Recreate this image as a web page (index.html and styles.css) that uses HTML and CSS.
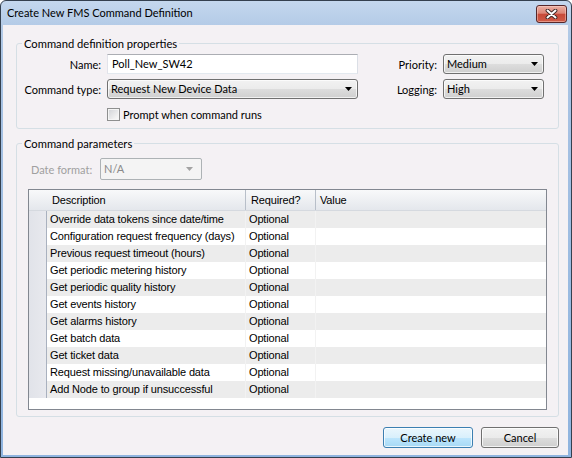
FILE: index.html
```html
<!DOCTYPE html>
<html>
<head>
<meta charset="utf-8">
<title>Create New FMS Command Definition</title>
<link rel="stylesheet" href="styles.css">
</head>
<body>
<div class="window">
  <div class="titlebar">
    <span class="title">Create New FMS Command Definition</span>
    <div class="close">
      <svg width="13" height="10" viewBox="0 0 13 10"><path d="M2.5 1.5 L10.5 8.5 M10.5 1.5 L2.5 8.5" stroke="#3b2624" stroke-width="3.8" stroke-linecap="round"/><path d="M2.5 1.5 L10.5 8.5 M10.5 1.5 L2.5 8.5" stroke="#ffffff" stroke-width="2" stroke-linecap="round"/></svg>
    </div>
  </div>
  <div class="client">
    <fieldset class="group props">
      <legend>Command definition properties</legend>
      <div class="props-grid">
        <span class="lbl">Name:</span>
        <div class="textbox">Poll_New_SW42</div>
        <span class="lbl">Priority:</span>
        <div class="combo"><span class="combo-text">Medium</span><svg class="arrow" width="7" height="4" viewBox="0 0 7 4"><path d="M0 0H7L3.5 4Z" fill="#000"/></svg></div>
        <span class="lbl">Command type:</span>
        <div class="combo"><span class="combo-text">Request New Device Data</span><svg class="arrow" width="7" height="4" viewBox="0 0 7 4"><path d="M0 0H7L3.5 4Z" fill="#000"/></svg></div>
        <span class="lbl">Logging:</span>
        <div class="combo"><span class="combo-text">High</span><svg class="arrow" width="7" height="4" viewBox="0 0 7 4"><path d="M0 0H7L3.5 4Z" fill="#000"/></svg></div>
        <div class="check-row"><span class="checkbox"></span><span>Prompt when command runs</span></div>
      </div>
    </fieldset>
    <fieldset class="group params">
      <legend>Command parameters</legend>
      <div class="date-row">
        <span class="lbl-dis">Date format:</span>
        <div class="combo-dis"><span class="combo-text">N/A</span><svg class="arrow" width="7" height="4" viewBox="0 0 7 4"><path d="M0 0H7L3.5 4Z" fill="#a3a3a3"/></svg></div>
      </div>
      <div class="dgv">
        <div class="row head"><div class="c rh"></div><div class="c">Description</div><div class="c">Required?</div><div class="c last">Value</div></div>
        <div class="row alt"><div class="c rh"></div><div class="c">Override data tokens since date/time</div><div class="c">Optional</div><div class="c last"></div></div>
        <div class="row"><div class="c rh"></div><div class="c">Configuration request frequency (days)</div><div class="c">Optional</div><div class="c last"></div></div>
        <div class="row alt"><div class="c rh"></div><div class="c">Previous request timeout (hours)</div><div class="c">Optional</div><div class="c last"></div></div>
        <div class="row"><div class="c rh"></div><div class="c">Get periodic metering history</div><div class="c">Optional</div><div class="c last"></div></div>
        <div class="row alt"><div class="c rh"></div><div class="c">Get periodic quality history</div><div class="c">Optional</div><div class="c last"></div></div>
        <div class="row"><div class="c rh"></div><div class="c">Get events history</div><div class="c">Optional</div><div class="c last"></div></div>
        <div class="row alt"><div class="c rh"></div><div class="c">Get alarms history</div><div class="c">Optional</div><div class="c last"></div></div>
        <div class="row"><div class="c rh"></div><div class="c">Get batch data</div><div class="c">Optional</div><div class="c last"></div></div>
        <div class="row alt"><div class="c rh"></div><div class="c">Get ticket data</div><div class="c">Optional</div><div class="c last"></div></div>
        <div class="row"><div class="c rh"></div><div class="c">Request missing/unavailable data</div><div class="c">Optional</div><div class="c last"></div></div>
        <div class="row alt"><div class="c rh"></div><div class="c">Add Node to group if unsuccessful</div><div class="c">Optional</div><div class="c last"></div></div>
      </div>
    </fieldset>
    <div class="buttons">
      <button class="btn default create">Create new</button>
      <button class="btn cancel">Cancel</button>
    </div>
  </div>
</div>
</body>
</html>
```
FILE: styles.css
```css
* { box-sizing: border-box; }
html, body { margin: 0; padding: 0; }
body {
  width: 572px;
  height: 458px;
  overflow: hidden;
  background: #ffffff;
  font-family: Lato, "Liberation Sans", sans-serif;
  font-size: 11px;
  color: #000;
}
.window {
  width: 572px;
  height: 458px;
  border: 1px solid #34404f;
  border-radius: 6px 6px 0 0;
  background: linear-gradient(180deg, #c4d7ee 0px, #b4cbe7 24px, #a9c3e3 60px, #8fb4df 100%);
  padding: 0 3px 2px 2px;
  display: flex;
  flex-direction: column;
}
.titlebar {
  height: 24px;
  display: flex;
  align-items: center;
  justify-content: space-between;
  padding-left: 4px;
  padding-right: 1px;
}
.title {
  font-size: 11px;
  line-height: 16px;
  color: #000;
}
.close {
  width: 31px;
  height: 18px;
  margin-top: 2px;
  border: 1px solid #56272a;
  border-radius: 3px;
  background: linear-gradient(180deg, #ebb0a3 0%, #dd8576 45%, #c84a39 52%, #cf5b47 100%);
  box-shadow: inset 0 0 0 1px rgba(255, 220, 210, 0.45);
  display: flex;
  align-items: center;
  justify-content: center;
}
.client {
  flex: 1;
  background: #f4f1f4;
  padding: 10px 9px 7px 13px;
  display: flex;
  flex-direction: column;
}
.group {
  margin: 0;
  border: 1px solid #d5dfe5;
  border-radius: 3px;
  min-width: 0;
}
.group legend {
  padding: 0 2px;
  height: 17px;
  line-height: 17px;
  font-size: 11.2px;
}
.props {
  padding: 2px 14px 4px 5px;
}
.props-grid {
  display: grid;
  grid-template-columns: 79px 251px 1fr 101px;
  grid-template-rows: 20px 20px 20px;
  column-gap: 6px;
  row-gap: 5px;
  align-items: center;
}
.lbl {
  text-align: right;
  white-space: nowrap;
}
.textbox {
  height: 20px;
  background: #fff;
  border: 1px solid;
  border-color: #abadb3 #dbdfe6 #e3e9ef #e2e3ea;
  padding-left: 4px;
  line-height: 18px;
}
.combo {
  height: 20px;
  border: 1px solid #707070;
  border-radius: 3px;
  background: linear-gradient(180deg, #f2f2f2 0%, #ebebeb 50%, #dddddd 50%, #cfcfcf 100%);
  box-shadow: inset 0 0 0 1px rgba(255, 255, 255, 0.7);
  display: flex;
  align-items: center;
  justify-content: space-between;
  padding: 0 5px 0 3px;
}
.combo-text { line-height: 16px; }
.arrow { display: block; flex: none; }
.check-row {
  grid-column: 2 / 5;
  display: flex;
  align-items: center;
  gap: 3px;
}
.checkbox {
  width: 13px;
  height: 13px;
  border: 1px solid #8e8f8f;
  background: linear-gradient(135deg, #d0d2d6 0%, #f0f0f0 70%, #fbfbfb 100%);
  box-shadow: inset 0 0 0 1px #f5f5f5;
}
.params {
  margin-top: 6px;
  padding: 6px 11px 6px 11px;
}
.params legend {
  margin-left: -6px;
}
.date-row {
  display: flex;
  align-items: center;
  padding-left: 3px;
  height: 22px;
}
.lbl-dis {
  width: 69px;
  color: #a0a0a0;
}
.combo-dis {
  width: 102px;
  height: 22px;
  border: 1px solid #adb2b5;
  border-radius: 2px;
  background: #f4f4f4;
  color: #8a8a8a;
  display: flex;
  align-items: center;
  justify-content: space-between;
  padding: 0 8px 0 3px;
}
.dgv {
  margin-top: 9px;
  height: 221px;
  border: 1px solid #828790;
  background: #fff;
  font-family: "Liberation Sans", Arial, sans-serif;
  font-size: 11px;
  letter-spacing: -0.15px;
  overflow: hidden;
}
.row {
  display: grid;
  grid-template-columns: 18px 199px 70px 1fr;
  height: 17px;
}
.row .c {
  border-right: 1px solid #f2f2f2;
  padding-left: 3px;
  line-height: 17px;
  white-space: nowrap;
  overflow: hidden;
}
.row .c.last { border-right: none; }
.row.alt { background: #ececec; }
.row .c.rh {
  background: linear-gradient(90deg, #e1e3e9 0%, #e8e9ee 100%);
  border-right: 1px solid #a9b1bf;
  padding: 0;
}
.row.head {
  height: 21px;
  background: linear-gradient(180deg, #f8f9fa 0%, #eef0f3 50%, #e4e7ec 100%);
  border-bottom: 1px solid #d5d9df;
}
.row.head .c {
  line-height: 20px;
  padding-left: 5px;
  border-right: 1px solid #b8bfc9;
}
.row.head .c.rh {
  background: transparent;
  border-right: none;
}
.row.head .c.last { border-right: none; padding-left: 4px; }
.buttons {
  margin-top: 10px;
  display: flex;
  justify-content: flex-end;
  gap: 8px;
}
.btn {
  height: 21px;
  border: 1px solid #707070;
  border-radius: 3px;
  background: linear-gradient(180deg, #f2f2f2 0%, #ebebeb 50%, #dddddd 50%, #cfcfcf 100%);
  box-shadow: inset 0 0 0 1px rgba(255, 255, 255, 0.75);
  font-family: Lato, "Liberation Sans", sans-serif;
  font-size: 11px;
  color: #000;
  padding: 0;
}
.btn.default {
  border-color: #3c7fb1;
  background: linear-gradient(180deg, #eaf6fd 0%, #d9f0fc 50%, #bee6fd 50%, #a7d9f5 100%);
}
.btn.create { width: 90px; }
.btn.cancel { width: 78px; }
```
